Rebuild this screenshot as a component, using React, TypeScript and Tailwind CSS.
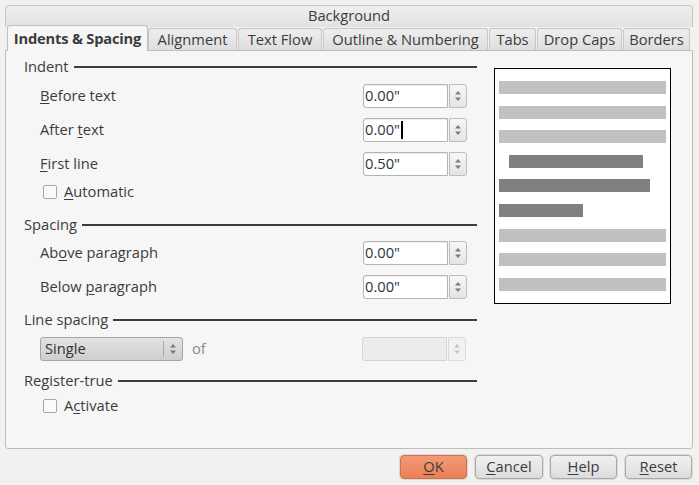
import React from 'react';

const font = { fontFamily: '"Open Sans", "DejaVu Sans", sans-serif' };

function U({ children }: { children: React.ReactNode }) {
  return <span className="underline underline-offset-2 decoration-1">{children}</span>;
}

function Heading({ text }: { text: string }) {
  return (
    <div className="flex h-[18px] items-center">
      <span className="-mt-[1px] text-[14.7px] leading-none text-[#3c3c3c]">{text}</span>
      <div className="ml-[5px] h-[2px] flex-1 bg-[#3c3c3c]" />
    </div>
  );
}

function SpinArrows({ disabled }: { disabled?: boolean }) {
  const c = disabled ? '#c4c4c4' : '#7a7a7a';
  return (
    <svg width="8" height="12" viewBox="0 0 8 12">
      <path d="M4 1 L7 4.5 L1 4.5 Z" fill={c} />
      <path d="M1 7.5 L7 7.5 L4 11 Z" fill={c} />
    </svg>
  );
}

function SpinField({ value, cursor, disabled }: { value?: string; cursor?: boolean; disabled?: boolean }) {
  return (
    <div className="flex h-[24px]">
      <div
        className={
          disabled
            ? 'flex h-full w-[85px] items-center rounded-l-[3px] border border-[#d4d4d4] bg-[#ececec]'
            : 'flex h-full w-[85px] items-center rounded-l-[3px] border border-[#b4b4b4] bg-white pl-[1px] shadow-[inset_0_1px_1px_rgba(0,0,0,0.08)]'
        }
      >
        <span className="-mt-[1px] text-[14.7px] leading-none text-[#2e3436]">{value}</span>
        {cursor && <span className="ml-[1px] h-[18px] w-[2px] bg-black" />}
      </div>
      <div
        className={
          disabled
            ? 'ml-[1px] flex h-full w-[18px] items-center justify-center rounded-r-[3px] border border-[#dadada] bg-[#f2f2f2]'
            : 'ml-[1px] flex h-full w-[18px] items-center justify-center rounded-r-[3px] border border-[#bdbdbd] bg-gradient-to-b from-[#f7f7f7] to-[#e4e4e4]'
        }
      >
        <SpinArrows disabled={disabled} />
      </div>
    </div>
  );
}

function FieldRow({ label, value, cursor, className }: { label: React.ReactNode; value: string; cursor?: boolean; className: string }) {
  return (
    <div className={`flex h-[24px] items-center ${className}`}>
      <span className="-mt-[2px] w-[339px] pl-[16px] text-[14.7px] leading-none text-[#3c3c3c]">{label}</span>
      <SpinField value={value} cursor={cursor} />
    </div>
  );
}

function Check({ label, className }: { label: React.ReactNode; className: string }) {
  return (
    <div className={`flex h-[20px] items-center pl-[19px] ${className}`}>
      <div className="h-[14px] w-[14px] rounded-[2px] border border-[#a6a6a6] bg-[#fbfbfb]" />
      <span className="-mt-[1px] ml-[7px] text-[14.7px] leading-none text-[#3c3c3c]">{label}</span>
    </div>
  );
}

const tabs = [
  { name: 'Alignment', w: 'w-[89px]' },
  { name: 'Text Flow', w: 'w-[84px]' },
  { name: 'Outline & Numbering', w: 'w-[165px]' },
  { name: 'Tabs', w: 'w-[47px]' },
  { name: 'Drop Caps', w: 'w-[85px]' },
  { name: 'Borders', w: 'w-[67px]' },
];

const bars = [
  { dark: false, cls: 'w-[167px]' },
  { dark: false, cls: 'w-[167px]' },
  { dark: false, cls: 'w-[167px]' },
  { dark: true, cls: 'ml-[10px] w-[134px]' },
  { dark: true, cls: 'w-[151px]' },
  { dark: true, cls: 'w-[84px]' },
  { dark: false, cls: 'w-[167px]' },
  { dark: false, cls: 'w-[167px]' },
  { dark: false, cls: 'w-[167px]' },
];

function Button({ children, primary, className }: { children: React.ReactNode; primary?: boolean; className: string }) {
  return (
    <div
      className={
        primary
          ? `flex h-[24px] items-center justify-center rounded-[4px] border border-[#c9734f] bg-gradient-to-b from-[#f39a76] to-[#ea7f56] text-[14.7px] leading-none text-[#3c3c3c] shadow-[0_0_0_1px_#d8d8d8] ${className}`
          : `flex h-[24px] items-center justify-center rounded-[4px] border border-[#a9a9a9] bg-gradient-to-b from-[#f1f1f1] to-[#dcdcdc] text-[14.7px] leading-none text-[#3c3c3c] shadow-[0_0_0_1px_#dadada] ${className}`
      }
    >
      <span className="-mt-[1px]">{children}</span>
    </div>
  );
}

export default function App() {
  return (
    <div className="flex h-[485px] w-[699px] flex-col bg-[#f2f1f0] px-[5px] pt-[5px]" style={font}>
      {/* upper tab row */}
      <div className="flex h-[22px] w-[688px] items-start justify-center rounded-t-[4px] border border-b-0 border-[#c6c6c6] bg-gradient-to-b from-[#efefef] to-[#e2e2e2] pt-[2px]">
        <span className="text-[14.7px] leading-none text-[#3c3c3c]">Background</span>
      </div>

      {/* lower tab row */}
      <div className="relative z-10 -mt-[2px] flex h-[25px] items-end pl-[2px]">
        <div className="-mb-[1px] flex h-[26px] w-[141px] items-center justify-center rounded-t-[3px] border border-b-0 border-[#c0c0c0] bg-[#f6f6f6]">
          <span className="-mt-[1px] text-[14.7px] font-bold leading-none tracking-[-0.2px] text-[#3c3c3c]">Indents &amp; Spacing</span>
        </div>
        {tabs.map((t) => (
          <div
            key={t.name}
            className={`flex h-[22px] items-center justify-center rounded-t-[3px] border border-b-0 border-[#c6c6c6] bg-gradient-to-b from-[#eeeeee] to-[#dedede] ${t.w} mr-[1px]`}
          >
            <span className="-mt-[1px] text-[14.7px] leading-none text-[#3c3c3c]">{t.name}</span>
          </div>
        ))}
      </div>

      {/* panel */}
      <div className="flex h-[399px] w-[688px] rounded-b-[3px] border border-[#bdbdbd] bg-[#f6f6f6]">
        <div className="flex w-[471px] flex-col pl-[18px] pt-[7px]">
          <Heading text="Indent" />
          <FieldRow className="mt-[8px]" label={<><U>B</U>efore text</>} value={'0.00"'} />
          <FieldRow className="mt-[10px]" label={<>After <U>t</U>ext</>} value={'0.00"'} cursor />
          <FieldRow className="mt-[10px]" label={<><U>F</U>irst line</>} value={'0.50"'} />
          <Check className="mt-[6px]" label={<><U>A</U>utomatic</>} />

          <div className="mt-[14px]">
            <Heading text="Spacing" />
          </div>
          <FieldRow className="mt-[7px]" label={<>Ab<U>o</U>ve paragraph</>} value={'0.00"'} />
          <FieldRow className="mt-[10px]" label={<>Below <U>p</U>aragraph</>} value={'0.00"'} />

          <div className="mt-[12px]">
            <Heading text="Line spacing" />
          </div>
          <div className="mt-[8px] flex h-[24px] items-center">
            <div className="ml-[16px] flex h-[24px] w-[143px] items-center rounded-[3px] border border-[#a4a4a4] bg-gradient-to-b from-[#e2e2e2] to-[#cfcfcf] pl-[4px]">
              <span className="-mt-[1px] flex-1 text-[14.7px] font-medium leading-none text-[#2e3436]">Single</span>
              <div className="h-[16px] w-[1px] bg-[#a8a8a8]" />
              <div className="flex w-[18px] justify-center">
                <SpinArrows />
              </div>
            </div>
            <span className="-mt-[1px] ml-[9px] w-[170px] text-[14.7px] leading-none text-[#8a8a8a]">of</span>
            <SpinField disabled />
          </div>

          <div className="mt-[11px]">
            <Heading text="Register-true" />
          </div>
          <Check className="mt-[6px]" label={<>A<U>c</U>tivate</>} />
        </div>

        <div className="ml-[17px] mt-[17px] flex h-[236px] w-[177px] flex-col gap-[11.6px] border border-black bg-white px-[4px] pt-[12px]">
          {bars.map((b, i) => (
            <div key={i} className={`h-[13px] ${b.dark ? 'bg-[#808080]' : 'bg-[#c0c0c0]'} ${b.cls}`} />
          ))}
        </div>
      </div>

      {/* buttons */}
      <div className="mt-[6px] flex">
        <Button primary className="ml-[395px] w-[67px]"><U>O</U>K</Button>
        <Button className="ml-[8px] w-[68px]"><U>C</U>ancel</Button>
        <Button className="ml-[7px] w-[67px]"><U>H</U>elp</Button>
        <Button className="ml-[8px] w-[67px]"><U>R</U>eset</Button>
      </div>
    </div>
  );
}
